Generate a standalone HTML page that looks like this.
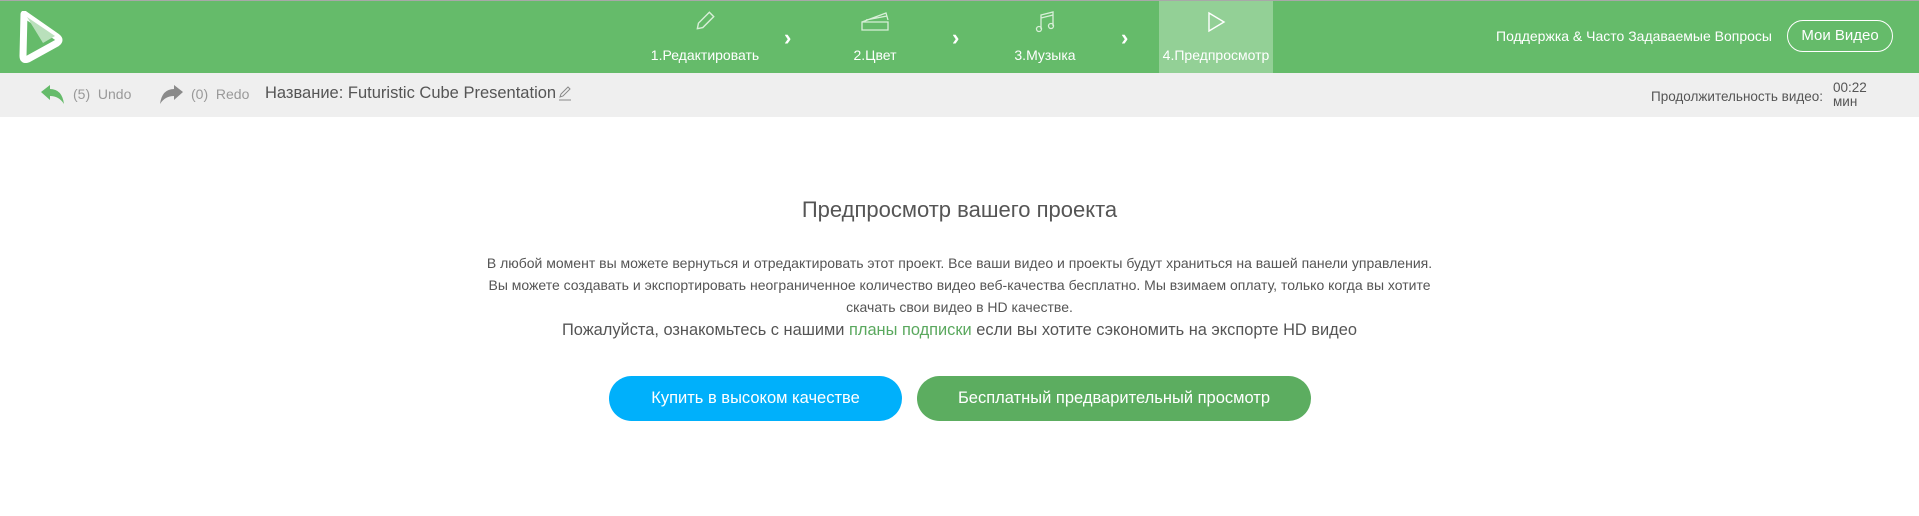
<!DOCTYPE html>
<html><head><meta charset="utf-8"><style>
*{margin:0;padding:0;box-sizing:border-box}
body{width:1919px;height:516px;overflow:hidden;background:#fff;font-family:"Liberation Sans",sans-serif;position:relative}
.top{position:absolute;left:0;top:0;width:1919px;height:73px;background:#65bb6a;border-top:1px solid #a8a8a8}
.bar{position:absolute;left:0;top:73px;width:1919px;height:44px;background:#efefef}
.a{position:absolute;white-space:nowrap}
.step{position:absolute;top:0;height:72px;text-align:center;color:#fff;font-size:14px}
.step .lbl{position:absolute;top:46px;left:0;right:0}
.chev{position:absolute;top:24px;color:#fff;font-size:22px;font-weight:bold}
.p{position:absolute;left:0;width:1919px;text-align:center;color:#555;font-size:14px}
.btn{position:absolute;top:376px;height:45px;border-radius:23px;color:#fff;font-size:16.5px;text-align:center;line-height:45px}
</style></head><body>
<div class="top">
<svg class="a" style="left:19px;top:10px" width="44" height="52" viewBox="0 0 44 52"><path d="M5 3 L38 26 Q42 29 38 32 L9 48 Q4 50 4 45 Z" fill="none" stroke="#fff" stroke-width="7" stroke-linejoin="round"/><path d="M8 6 L36 25 L24 32 Z" fill="#b9e0bb"/></svg>
<div class="step" style="left:640px;width:130px"><svg style="margin-top:8px" width="24" height="24" viewBox="0 0 22 22"><path d="M4 18 L5 13 L15 3 L19 7 L9 17 Z M4 18 L9 17" fill="none" stroke="#d8efd8" stroke-width="1.3"/></svg><div class="lbl">1.Редактировать</div></div>
<div class="chev" style="left:784px">›</div>
<div class="step" style="left:820px;width:110px"><svg style="margin-top:9px" width="30" height="22" viewBox="0 0 30 22"><path d="M2 12 L26 3 L28 10 M2 12 L28 12 L28 20 L2 20 Z M6 10 L27 6" fill="none" stroke="#d8efd8" stroke-width="1.3"/></svg><div class="lbl">2.Цвет</div></div>
<div class="chev" style="left:952px">›</div>
<div class="step" style="left:990px;width:110px"><svg style="margin-top:9px" width="22" height="24" viewBox="0 0 22 24"><path d="M7 19 V5 L19 2 V16 M7 8 L19 5" fill="none" stroke="#d8efd8" stroke-width="1.3"/><circle cx="5" cy="19" r="2.5" fill="none" stroke="#d8efd8" stroke-width="1.3"/><circle cx="17" cy="16" r="2.5" fill="none" stroke="#d8efd8" stroke-width="1.3"/></svg><div class="lbl">3.Музыка</div></div>
<div class="chev" style="left:1121px">›</div>
<div class="step" style="left:1159px;width:114px;background:#93d096"><svg style="margin-top:10px" width="20" height="22" viewBox="0 0 20 22"><path d="M3 2 L18 11 L3 20 Z" fill="none" stroke="#fff" stroke-width="1.4"/></svg><div class="lbl">4.Предпросмотр</div></div>
<div class="a" style="left:1496px;top:27px;color:#fff;font-size:14px">Поддержка &amp; Часто Задаваемые Вопросы</div>
<div class="a" style="left:1787px;top:19px;width:106px;height:32px;border:1.5px solid #fff;border-radius:16px;color:#fff;font-size:15px;text-align:center;line-height:29px">Мои Видео</div>
</div>
<div class="bar">
<svg class="a" style="left:40px;top:11px" width="26" height="22" viewBox="0 0 26 22"><path d="M1 8 L10 1 L10 5 Q22 5 24 20 Q19 12 10 12 L10 16 Z" fill="#65bb6a"/></svg>
<div class="a" style="left:73px;top:13px;color:#999;font-size:14px">(5)&nbsp; Undo</div>
<svg class="a" style="left:158px;top:11px" width="26" height="22" viewBox="0 0 26 22"><path d="M25 8 L16 1 L16 5 Q4 5 2 20 Q7 12 16 12 L16 16 Z" fill="#8a8a8a"/></svg>
<div class="a" style="left:191px;top:13px;color:#999;font-size:14px">(0)&nbsp; Redo</div>
<div class="a" style="left:265px;top:11px;color:#555;font-size:16.5px">Название: Futuristic Cube Presentation</div>
<svg class="a" style="left:558px;top:12px" width="14" height="16" viewBox="0 0 14 16"><path d="M2 12 L3 9 L10 2 L12 4 L5 11 Z M1 15 H13" fill="none" stroke="#888" stroke-width="1"/></svg>
<div class="a" style="left:1651px;top:16px;color:#555;font-size:13.5px">Продолжительность видео:</div>
<div class="a" style="left:1833px;top:8px;color:#555;font-size:13.5px;line-height:14px">00:22<br>мин</div>
</div>
<div class="p" style="top:197px;font-size:22px;color:#555">Предпросмотр вашего проекта</div>
<div class="p" style="top:255px">В любой момент вы можете вернуться и отредактировать этот проект. Все ваши видео и проекты будут храниться на вашей панели управления.</div>
<div class="p" style="top:277px">Вы можете создавать и экспортировать неограниченное количество видео веб-качества бесплатно. Мы взимаем оплату, только когда вы хотите</div>
<div class="p" style="top:299px">скачать свои видео в HD качестве.</div>
<div class="p" style="top:321px;font-size:16.4px">Пожалуйста, ознакомьтесь с нашими <span style="color:#5aa85e">планы подписки</span> если вы хотите сэкономить на экспорте HD видео</div>
<div class="btn" style="left:609px;width:293px;background:#00b0fb">Купить в высоком качестве</div>
<div class="btn" style="left:917px;width:394px;background:#5cad60">Бесплатный предварительный просмотр</div>
</body></html>
